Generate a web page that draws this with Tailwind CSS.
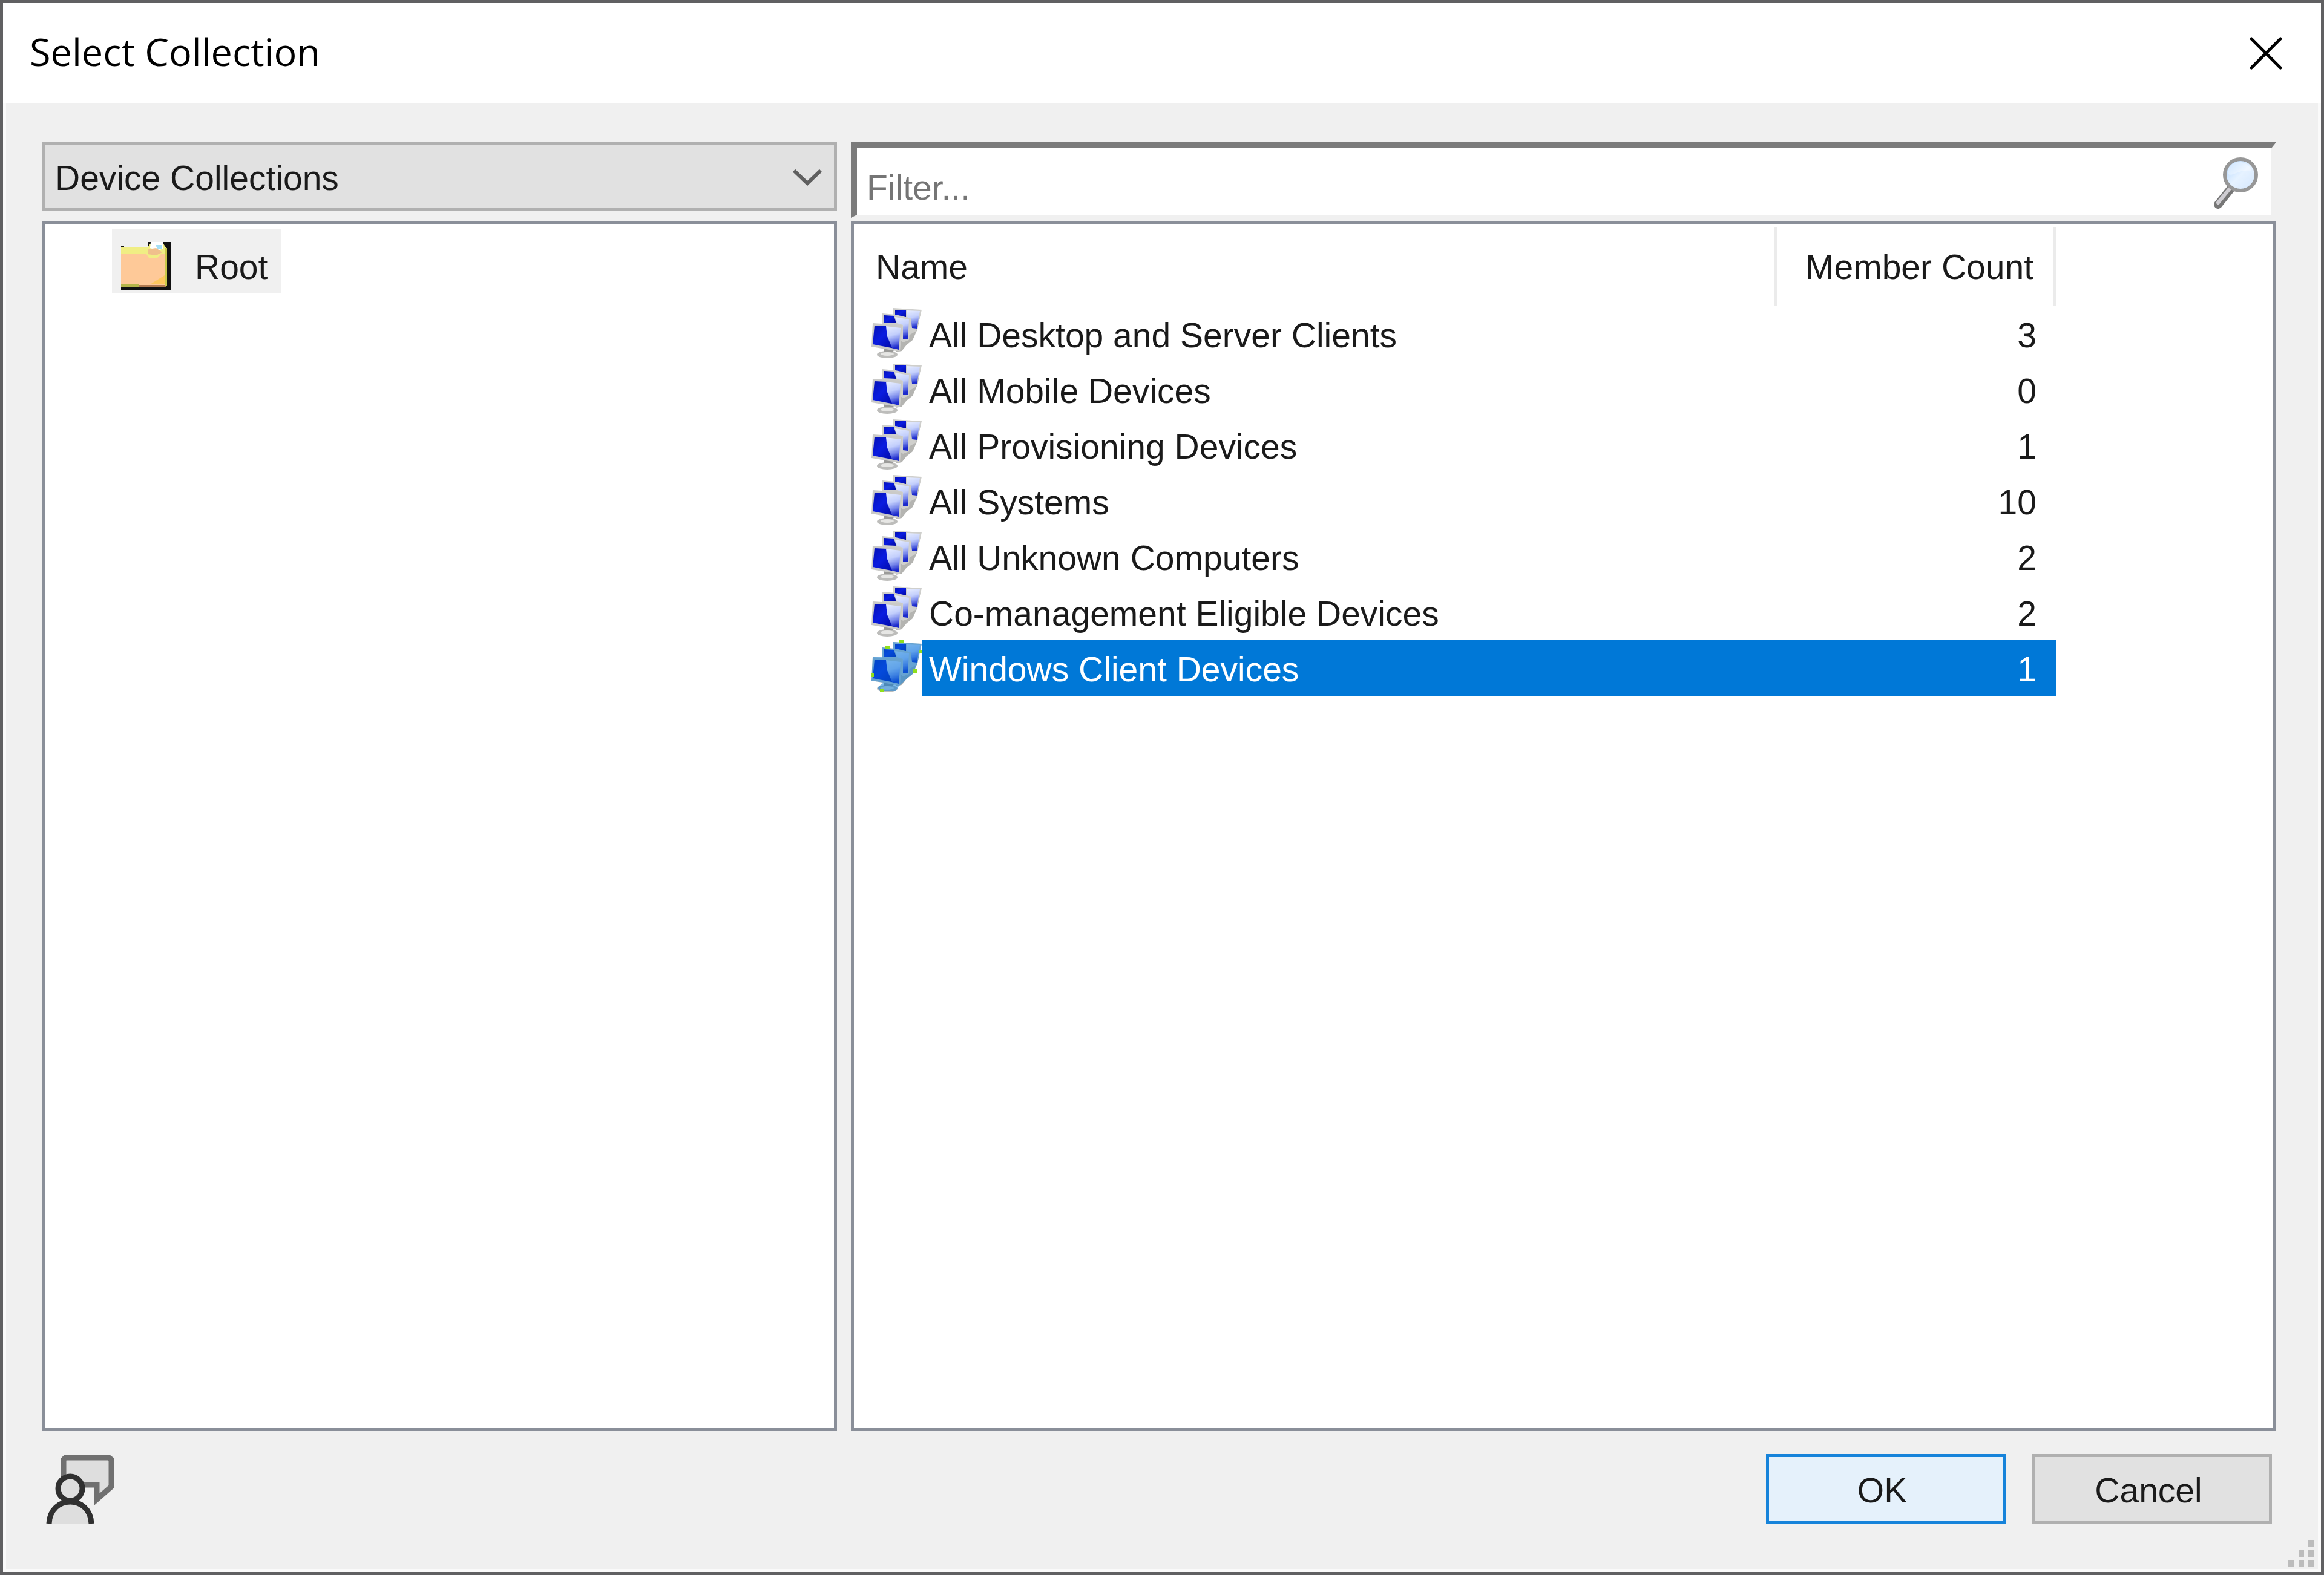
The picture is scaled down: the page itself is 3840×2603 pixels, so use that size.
<!DOCTYPE html>
<html lang="en">
<head>
  <meta charset="UTF-8">
  <meta name="viewport" content="width=device-width, initial-scale=1.0">
  <title>Select Collection</title>
  <script src="https://cdn.jsdelivr.net/npm/@tailwindcss/browser@4"></script>
</head>
<body class="bg-[#606062] text-[#1a1a1a] text-[57px] leading-[70px] font-['Liberation_Sans',Arial,sans-serif]">
  <!-- shared icon parts -->
  <svg class="absolute w-0 h-0" aria-hidden="true">
    <defs>
      <linearGradient id="screen-dark" x1="0" y1="0" x2="1" y2="1">
        <stop offset="0" stop-color="#0410b4"/>
        <stop offset=".45" stop-color="#0a1ce0"/>
        <stop offset="1" stop-color="#0008a0"/>
      </linearGradient>
      <linearGradient id="screen-light" x1="0" y1="0" x2=".2" y2="1">
        <stop offset="0" stop-color="#e8eeff"/>
        <stop offset=".45" stop-color="#c3cffc"/>
        <stop offset=".75" stop-color="#7484ea"/>
        <stop offset="1" stop-color="#1c2acc"/>
      </linearGradient>
      <linearGradient id="lens" x1="0" y1="0" x2="1" y2="1">
        <stop offset="0" stop-color="#a9d2ff"/>
        <stop offset=".5" stop-color="#e6f2ff"/>
        <stop offset="1" stop-color="#d3e6fd"/>
      </linearGradient>
      <symbol id="computers" viewBox="0 0 84 87">
        <path d="M58 64 68 56 76 38 82 8 78 6 62 30 48 40 40 76 50 74Z" fill="#b4b4b1"/>
        <path d="M36 3 83 6 74 41 62 48 36 20Z" fill="#cfcfcc"/>
        <path d="M39 6H57V18H39Z" fill="url(#screen-dark)"/>
        <path d="M58 7 80 8 75 37 67 36 65 20 58 18Z" fill="url(#screen-light)"/>
        <path d="M18 12 40 14 65 20 62 56 52 60 18 34Z" fill="#cfcfcc"/>
        <path d="M21 15 37 16 41 28 20 27Z" fill="url(#screen-dark)"/>
        <path d="M39 18 62 22 60 55 52 54 52 31 42 28Z" fill="url(#screen-light)"/>
        <ellipse cx="26" cy="80" rx="17" ry="6" fill="#bdbdbb"/>
        <ellipse cx="26" cy="79" rx="11" ry="3" fill="#e6e6e4"/>
        <path d="M20 66 38 70 36 75H20Z" fill="#9b9b99"/>
        <path d="M2 28 51 31 47 75 0 67Z" fill="#cacac8"/>
        <path d="M5 32 26 33 28 50 38 70 2 63Z" fill="url(#screen-dark)"/>
        <path d="M24 33 48 36 45 72 34 69 26 50Z" fill="url(#screen-light)"/>
      </symbol>
    </defs>
  </svg>

  <div class="min-h-screen flex flex-col border-5 border-[#606062] bg-[#f0f0f0]">
    <header class="flex items-center justify-between h-[165px] bg-white pl-[44px] pr-[60px]">
      <h1 class="pb-[5px] font-['Open_Sans','Noto_Sans',sans-serif] text-[63px] leading-[80px] text-black">Select Collection</h1>
      <button type="button" aria-label="Close" class="p-1">
        <svg class="w-[54px] h-[54px]" viewBox="0 0 54 54" fill="none" stroke="#000" stroke-width="5" stroke-linecap="round"><path d="M3 3 51 51M51 3 3 51"/></svg>
      </button>
    </header>

    <div class="flex-1 flex flex-col border-x-5 border-b-5 border-[#fafafa]">
      <main class="flex-1 grid grid-cols-[1313fr_2355fr] gap-x-[23px] pt-[65px] pl-[60px] pr-[69px]">
        <section class="flex flex-col gap-[17px]">
          <div class="relative">
            <select aria-label="Collection type" class="appearance-none block w-full h-[113px] border-5 border-[#b0b0b0] bg-[#e1e1e1] pt-[4px] pl-[16px] rounded-none">
              <option>Device Collections</option>
            </select>
            <svg class="absolute right-[25px] top-[44px] w-[48px] h-[28px] pointer-events-none" viewBox="0 0 48 28" fill="none" stroke="#5f5f5f" stroke-width="6"><path d="M2 3 24 24 46 3"/></svg>
          </div>
          <ul class="flex-1 border-5 border-[#8a8f99] bg-white pt-[8px] pl-[110px]">
            <li class="flex items-end gap-[39px] w-[280px] h-[106px] bg-[#f0f0f0] pl-[15px] pb-[4px]">
              <svg class="w-[83px] h-[82px]" viewBox="0 0 83 82">
                <path d="M0 8H5V11H44V2H49V8H70V2H82V82H0Z" fill="#111"/>
                <path d="M0 11H44L48 5H70L74 11V76H0Z" fill="#f0ee84"/>
                <path d="M49 2H69V13L62 16 48 12Z" fill="#fff"/>
                <path d="M57 7H68V13H60Z" fill="#a5dff5"/>
                <path d="M44 14 58 12 68 19 58 24 44 22Z" fill="#f0c08c"/>
                <path d="M0 22H42L46 28H60L66 22H72V74H0Z" fill="#fec998"/>
                <path d="M72 57V72H48Z" fill="#fdc75e"/>
                <path d="M0 72H30V76H0Z" fill="#b5b54a"/>
                <path d="M30 73H74V76H30Z" fill="#b07a50"/>
                <path d="M73 12H76V75H73Z" fill="#c8c84a"/>
              </svg>
              <span class="pb-[4px]">Root</span>
            </li>
          </ul>
        </section>

        <section class="flex flex-col gap-[5px]">
          <div class="flex items-center h-[125px] border-t-10 border-l-10 border-r-8 border-b-5 border-t-[#7b7b7b] border-l-[#7b7b7b] border-r-[#f0f0f0] border-b-[#f0f0f0] bg-white pl-[16px] pr-[19px]">
            <input type="text" aria-label="Filter" placeholder="Filter..." class="flex-1 h-full pt-[20px] outline-none placeholder:text-[#757575]">
            <button type="button" aria-label="Search">
              <svg class="w-[76px] h-[90px]" viewBox="0 0 76 90">
                <path d="M27 58 7 83" stroke="#777" stroke-width="14" stroke-linecap="round"/>
                <path d="M25 58 7 80" stroke="#cfcdd2" stroke-width="6" stroke-linecap="round"/>
                <circle cx="44" cy="34" r="26" fill="url(#lens)" stroke="#979797" stroke-width="6"/>
                <path d="M24 33C32 37 40 25 62 27 58 11 32 7 24 23Z" fill="#fff" opacity=".35"/>
              </svg>
            </button>
          </div>
          <div class="flex-1 border-5 border-[#8a8f99] bg-white pt-[5px]">
            <table class="table-fixed border-separate border-spacing-0 w-[1986px]">
              <thead>
                <tr class="h-[131px]">
                  <th scope="col" class="w-[1526px] p-0 pl-[36px] text-left font-normal border-r-5 border-[#ebebeb]">Name</th>
                  <th scope="col" class="w-[460px] p-0 pr-[32px] text-right font-normal border-r-5 border-[#ebebeb]">Member Count</th>
                </tr>
              </thead>
              <tbody id="rows"></tbody>
            </table>
          </div>
        </section>
      </main>

      <footer class="relative flex items-center pt-[38px] pb-[74px] pl-[66px] pr-[76px]">
        <button type="button" aria-label="Feedback">
          <svg class="w-[116px] h-[116px]" viewBox="0 0 116 116" fill="#dedede" stroke-width="9">
            <path d="M29 40V9L32 6H104L108 9V54L84 75V51H55" stroke="#707070"/>
            <circle cx="40" cy="57" r="20" stroke="#303030"/>
            <path d="M5 115C7 67 73 67 75 115" stroke="#303030"/>
          </svg>
        </button>
        <button type="button" class="ml-auto w-[396px] h-[116px] border-5 border-[#1683da] bg-[#e5f1fb] pt-[4px] pr-[12px]">OK</button>
        <button type="button" class="ml-[44px] w-[396px] h-[116px] border-5 border-[#b0b0b0] bg-[#e1e1e1] pt-[4px] pr-[12px]">Cancel</button>
        <svg class="absolute right-[6px] bottom-[3px] w-[43px] h-[45px]" viewBox="0 0 43 45" fill="#bcbcbc">
          <path d="M33 0H42V11H33ZM17 17H26V28H17ZM33 17H42V28H33ZM0 33H9V44H0ZM17 33H26V44H17ZM33 33H42V44H33Z"/>
        </svg>
      </footer>
    </div>
  </div>

  <script>
    const collections = [
      { name: "All Desktop and Server Clients", count: 3 },
      { name: "All Mobile Devices", count: 0 },
      { name: "All Provisioning Devices", count: 1 },
      { name: "All Systems", count: 10 },
      { name: "All Unknown Computers", count: 2 },
      { name: "Co-management Eligible Devices", count: 2 },
      { name: "Windows Client Devices", count: 1, selected: true }
    ];

    // the selected row gets a blue wash over its icon
    const wash = `
      <svg class="absolute left-[29px] top-0 w-[84px] h-[87px]" viewBox="0 0 84 87">
        <path d="M36 3 83 6 76 38 68 56 58 64 45 76 40 84 14 84 10 78 20 70 0 67 2 28 18 28 18 12 36 14Z" fill="#0078d7" opacity=".5"/>
        <path d="M45 0H53V4H45ZM22 10H30V14H22ZM79 16H84V22H79ZM0 54H4V61H0ZM69 48H75V54H69ZM14 81H20V86H14Z" fill="#8fdf1c"/>
      </svg>`;

    document.getElementById("rows").innerHTML = collections.map(item => `
      <tr class="h-[92px]">
        <td class="p-0">
          <div class="relative flex">
            <svg class="w-[84px] h-[87px] ml-[29px]"><use href="#computers"/></svg>
            ${item.selected ? wash : ""}
            <div class="flex-1 flex items-center h-[92px] pt-[4px] pl-[11px] ${item.selected ? "bg-[#0078d7] text-white" : ""}">${item.name}</div>
          </div>
        </td>
        <td class="p-0 pt-[4px] pr-[32px] text-right ${item.selected ? "bg-[#0078d7] text-white" : ""}">${item.count}</td>
      </tr>`).join("");
  </script>
</body>
</html>
